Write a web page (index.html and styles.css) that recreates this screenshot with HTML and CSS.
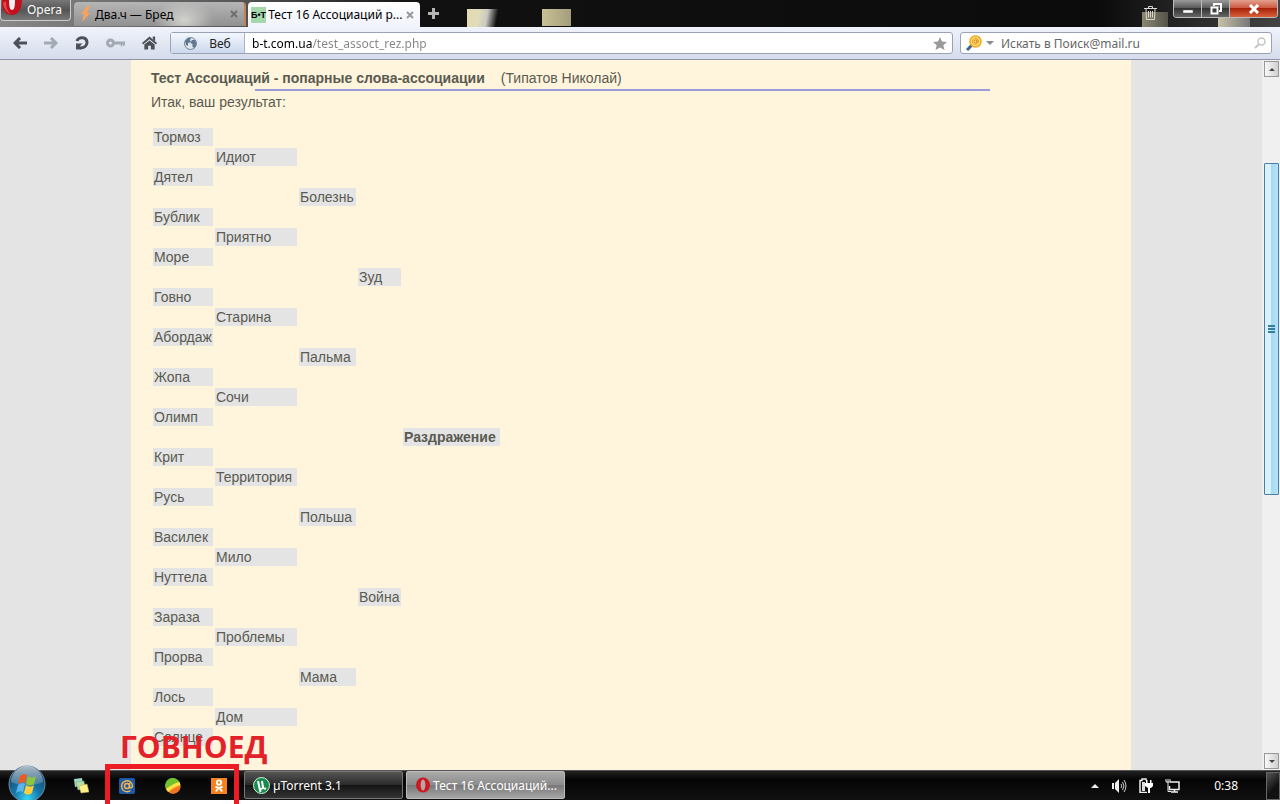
FILE: index.html
```html
<!DOCTYPE html>
<html lang="ru">

<head>
    <meta charset="UTF-8">
    <title>Тест 16 Ассоциаций</title>
    <link rel="stylesheet" href="styles.css">
</head>

<body>
    <header class="tabbar">
        <button class="opera-menu">
            <svg width="22" height="16" viewBox="0 0 22 16"><path d="M0 0h20c0 10-5 15-10 15C4 15 1 11 0 5z" fill="#c4101c"/><path d="M7 0h6c0 7-1 10-3 10S7 7 7 0z" fill="#eee"/><path d="M1 3c1 6 4 10 8 11-4-3-5-7-5-13" fill="#e8444a"/></svg>
            Opera
        </button>
        <nav class="tabs">
            <div class="tab">
                <svg width="12" height="18" viewBox="0 0 12 18"><path d="M7 1L1 9h3l-2 8 8-9H7l3-7z" fill="#f7a35c"/></svg>
                <a href="#">Два.ч — Бред</a>
                <button class="close" aria-label="Закрыть"><svg width="8" height="8" viewBox="0 0 8 8"><path d="M1 1l6 6M7 1L1 7" stroke="#6e6e6e" stroke-width="2"/></svg></button>
            </div>
            <div class="tab active">
                <span class="favicon">Б•Т</span>
                <a href="#">Тест 16 Ассоциаций р...</a>
                <button class="close" aria-label="Закрыть"><svg width="8" height="8" viewBox="0 0 8 8"><path d="M1 1l6 6M7 1L1 7" stroke="#999" stroke-width="2"/></svg></button>
            </div>
        </nav>
        <button class="new-tab" aria-label="Новая вкладка"><svg width="11" height="11" viewBox="0 0 11 11"><path d="M5.5 0v11M0 5.5h11" stroke="#b5b5b5" stroke-width="3"/></svg></button>
        <button class="trash" aria-label="Закрытые вкладки"><svg width="13" height="14" viewBox="0 0 13 14" fill="none" stroke="#d8d8d0"><path d="M0 2.5h13M4.5 2V.5h4V2M2 3l.5 10.5h8L11 3M4.5 5v6.5M6.5 5v6.5M8.5 5v6.5"/></svg></button>
        <div class="window-controls">
            <button aria-label="Свернуть"><svg width="12" height="12" viewBox="0 0 12 12"><path d="M1 7h10v3H1z" fill="#fff" stroke="#555" stroke-width=".5"/></svg></button>
            <button aria-label="Развернуть"><svg width="12" height="12" viewBox="0 0 12 12" fill="none" stroke="#fff" stroke-width="2"><path d="M4 3V1h7v7H9"/><path d="M1.5 4.5h6v6h-6z"/></svg></button>
            <button class="quit" aria-label="Выход"><svg width="12" height="10" viewBox="0 0 12 10"><path d="M2 1l8 8M10 1L2 9" stroke="#fff" stroke-width="3"/></svg></button>
        </div>
    </header>

    <div class="toolbar">
        <button aria-label="Назад"><svg width="14" height="12" viewBox="0 0 14 12" fill="none" stroke="#4c5158" stroke-width="3"><path d="M14 6H2M7 1L2 6l5 5"/></svg></button>
        <button aria-label="Вперёд"><svg width="14" height="12" viewBox="0 0 14 12" fill="none" stroke="#a3a9b3" stroke-width="3"><path d="M0 6h12M7 1l5 5-5 5"/></svg></button>
        <button aria-label="Обновить"><svg width="14" height="14" viewBox="0 0 14 14"><path d="M2 5C3 .5 12 .5 12 6.500C12 10 9 12 5 12" fill="none" stroke="#4c5158" stroke-width="3"/><path d="M1 7.500h6.500L5 10l1 3.500H1z" fill="#4c5158"/></svg></button>
        <button aria-label="Пароли"><svg width="19" height="10" viewBox="0 0 19 10" fill="none" stroke="#a3a9b3"><circle cx="4.500" cy="5" r="3" stroke-width="3"/><path d="M8 5h11" stroke-width="3"/><path d="M15.5 5v3.500M18 5v3" stroke-width="1.5"/></svg></button>
        <button aria-label="Домой"><svg width="15" height="14" viewBox="0 0 16 14" fill="#4c5158"><path d="M8 0l8 7-1 1.500L8 3 1 8.500 0 7z"/><path d="M11.5 0H14v5l-2.500-2z"/><path d="M2.500 8.500L8 4.200l5.500 4.300V14h-4v-4h-3v4h-4z"/></svg></button>
        <div class="address">
            <button class="site-info">
                <svg width="13" height="13" viewBox="0 0 13 13"><circle cx="6.500" cy="6.500" r="6" fill="#dde5ee" stroke="#718297"/><path d="M1 4l3-3 3 0-1 2 1 2-3 1 0 3-2-1zM8 3l3 0 1.500 4-2 4-2-1 0-3-2-1z" fill="#63778f"/></svg>
                Веб
            </button>
            <input class="url" type="text" aria-label="Адрес" value="b-t.com.ua/test_assoct_rez.php">
            <button aria-label="В закладки"><svg width="14" height="13" viewBox="0 0 14 13"><path d="M7 0l2 4.500 5 .5-3.700 3.300L11.500 13 7 10.500 2.500 13l1.200-4.700L0 5l5-.5z" fill="#999"/></svg></button>
        </div>
        <div class="search">
            <button aria-label="Выбор поиска">
                <svg width="28" height="16" viewBox="0 0 28 16"><path d="M1 15l5-5" stroke="#3d6692" stroke-width="3"/><circle cx="9.500" cy="6.500" r="5.500" fill="#ffe27a" stroke="#f5a51c" stroke-width="1.500"/><circle cx="9.500" cy="6.500" r="1.500" fill="none" stroke="#e0820f"/><path d="M11 4.500v3c.3 1 1.500.5 1.500-1a3 3 0 1 0-1.500 2.500" fill="none" stroke="#e0820f" stroke-width=".8"/><path d="M20 6h8l-4 4z" fill="#8a8a8a"/></svg>
            </button>
            <input type="text" aria-label="Поиск" placeholder="Искать в Поиск@mail.ru">
            <button aria-label="Найти"><svg width="12" height="12" viewBox="0 0 12 12" fill="none" stroke="#c5c5c5"><circle cx="7.500" cy="4.500" r="3.500" stroke-width="1.500"/><path d="M5 7l-4 4" stroke-width="2"/></svg></button>
        </div>
    </div>

    <div class="viewport">
        <main class="page">
            <div class="content">
                <p class="title"><b>Тест Ассоциаций - попарные слова-ассоциации</b> <span>(Типатов Николай)</span></p>
                <hr>
                <p>Итак, ваш результат:</p>
                <table class="words">
                    <colgroup><col class="c1"><col class="c2"><col class="c3"><col class="c4"><col class="c5"></colgroup>
                    <tbody></tbody>
                </table>
            </div>
        </main>
        <div class="scrollbar">
            <button aria-label="Вверх"><svg width="6" height="3" viewBox="0 0 8 4"><path d="M0 4l4-4 4 4z" fill="#444"/></svg></button>
            <div class="track">
                <div class="thumb"></div>
            </div>
            <button aria-label="Вниз"><svg width="6" height="3" viewBox="0 0 8 4"><path d="M0 0l4 4 4-4z" fill="#444"/></svg></button>
        </div>
    </div>

    <footer class="taskbar">
        <button class="start" aria-label="Пуск">
            <svg width="38" height="35" viewBox="0 0 38 35">
                <defs>
                    <radialGradient id="orb" cx=".5" cy=".9" r=".8"><stop offset="0" stop-color="#35d6f5"/><stop offset=".45" stop-color="#1878ac"/><stop offset="1" stop-color="#174568"/></radialGradient>
                    <linearGradient id="gloss" x2="0" y2="1"><stop offset="0" stop-color="#fff" stop-opacity=".65"/><stop offset="1" stop-color="#fff" stop-opacity=".15"/></linearGradient>
                </defs>
                <circle cx="19" cy="19" r="18" fill="url(#orb)" stroke="#6d8da2"/>
                <path d="M3 17a16 16 0 0 1 32 0c-9 4-22 5-32 0z" fill="url(#gloss)"/>
                <path d="M12 11c3-2 5-2 7-1l-2 8c-2-1-4-1-7 1z" fill="#ee5a23"/>
                <path d="M20 11c3 2 5 2 8 0l-2 8c-3 2-5 2-8 0z" fill="#8fc63d"/>
                <path d="M10 20c3-2 5-2 7-1l-2 8c-2-1-4-1-7 1z" fill="#5bb6ec"/>
                <path d="M18 20c3 2 5 2 8 0l-2 8c-3 2-5 2-8 0z" fill="#ffcf3a"/>
            </svg>
        </button>
        <div class="quick">
            <button aria-label="Записки"><svg width="16" height="16" viewBox="0 0 16 16"><path d="M1 1l8-1 1 7-8 2z" fill="#9fd9c8"/><path d="M3 4l8-1 1 7-7 2z" fill="#b6dfa0" stroke="#6ca08a" stroke-width=".5"/><path d="M6 8l8-2 2 8-8 1z" fill="#fff08a" stroke="#b9aa52" stroke-width=".5"/></svg></button>
            <div class="marked">
                <strong class="caption">ГОВНОЕД</strong>
                <button aria-label="Mail.ru"><svg width="16" height="16" viewBox="0 0 16 16"><rect width="16" height="16" rx="2" fill="#1b5ba5"/><g fill="none" stroke="#f4b34c" stroke-width="1.500"><circle cx="8" cy="8" r="2.500"/><path d="M10.500 5v4c.5 1.500 3 1 3-1A5.500 5.500 0 1 0 11.500 12.500"/></g></svg></button>
                <button aria-label="Браузер"><svg width="16" height="16" viewBox="0 0 16 16"><circle cx="8" cy="8" r="7.500" fill="#f8a01c"/><path d="M1 11A7.500 7.500 0 0 1 14.500 4C10 5 5 8 1 11z" fill="#6fc42e"/><path d="M1 11C5 8 10 5 14.500 4l1 3C10 8 6 11 3 14z" fill="#fbe34c"/><path d="M4 14.500C7 12 11 9 15.500 8A7.500 7.500 0 0 1 4 14.500z" fill="#ee7424"/></svg></button>
                <button aria-label="Одноклассники"><svg width="16" height="16" viewBox="0 0 16 16"><path fill="#f58220" d="M0 0h16v16H0z"/><g fill="none" stroke="#fff" stroke-width="1.800"><circle cx="8" cy="4.500" r="2.200"/><path d="M4.500 8.500c2 1.500 5 1.500 7 0M8 9.500L4.800 13.500M8 9.500l3.200 4"/></g></svg></button>
            </div>
        </div>
        <button class="task">
            <svg width="17" height="17" viewBox="0 0 17 17"><circle cx="8.500" cy="8.500" r="8" fill="#178a4c" stroke="#d8eee0"/><path d="M5 4l1.500 7c1 1.500 3 1 3.500-.5L9 4M10 10c.5 2 2 2 3 1M6.500 11l1 4" fill="none" stroke="#fff" stroke-width="2"/></svg>
            µTorrent 3.1
        </button>
        <button class="task current">
            <svg width="14" height="16" viewBox="0 0 14 16"><ellipse cx="7" cy="8" rx="7" ry="7.500" fill="#cc1820"/><ellipse cx="7" cy="8" rx="2.400" ry="5.500" fill="#b9a5a5"/></svg>
            Тест 16 Ассоциаций...
        </button>
        <div class="tray">
            <button aria-label="Скрытые значки"><svg width="8" height="4" viewBox="0 0 8 4"><path d="M0 4l4-4 4 4z" fill="#eee"/></svg></button>
            <button aria-label="Громкость"><svg width="16" height="14" viewBox="0 0 16 14"><path d="M1 4h2v6H1zM4 4l4-4v14l-4-4z" fill="#eee"/><path d="M10 5q1.500 2 0 4M11.500 3q3 4 0 8M13 1q4 6 0 12" fill="none" stroke="#ccc"/></svg></button>
            <button aria-label="Питание"><svg width="14" height="15" viewBox="0 0 14 15"><path d="M7 2.500V1H3v1.500H1v12h7" fill="none" stroke="#eee" stroke-width="1.500"/><path d="M3 4h3v9H3z" fill="#ddd"/><path d="M7 2h1.500v3H11V2h1.500v3H14v3l-2 2h-1v5H9v-5L6 8V5h1z" fill="#fff"/></svg></button>
            <button aria-label="Сеть"><svg width="15" height="14" viewBox="0 0 15 14" fill="none" stroke="#eee"><path d="M5 3h9v7.500H4.500V7M9.500 10.500v3M6 13h7" stroke-width="1.500"/><path d="M1 0v3h4V0M3 0v12.500h3"/></svg></button>
            <time>0:38</time>
            <button class="show-desktop" aria-label="Показать рабочий стол"></button>
        </div>
    </footer>

    <script>
        // слово и номер его столбца
        let words = [
            ["Тормоз", 0], ["Идиот", 1], ["Дятел", 0], ["Болезнь", 2],
            ["Бублик", 0], ["Приятно", 1], ["Море", 0], ["Зуд", 3],
            ["Говно", 0], ["Старина", 1], ["Абордаж", 0], ["Пальма", 2],
            ["Жопа", 0], ["Сочи", 1], ["Олимп", 0], ["Раздражение", 4],
            ["Крит", 0], ["Территория", 1], ["Русь", 0], ["Польша", 2],
            ["Василек", 0], ["Мило", 1], ["Нуттела", 0], ["Война", 3],
            ["Зараза", 0], ["Проблемы", 1], ["Прорва", 0], ["Мама", 2],
            ["Лось", 0], ["Дом", 1], ["Солнце", 0]
        ];
        let dest = document.querySelector(".words tbody");

        words.forEach(([word, column]) => {
            let row = dest.insertRow();
            for (let i = 0; i < 5; i++) {
                let cell = row.insertCell();
                if (i == column) {
                    cell.textContent = word;
                    cell.className = "word";
                }
            }
        });
    </script>
</body>

</html>
```
FILE: styles.css
```css
* {
    box-sizing: border-box;
}

body {
    margin: 0;
    padding-bottom: 4px;
    height: 100vh;
    display: flex;
    flex-direction: column;
    overflow: hidden;
    background-color: #fff;
    font-family: "Noto Sans", "Open Sans", sans-serif;
    font-size: 12px;
}

button {
    display: flex;
    align-items: center;
    justify-content: center;
    margin: 0;
    padding: 0;
    border: 0;
    background: none;
    font: inherit;
    color: inherit;
}

svg {
    display: block;
    flex: none;
}

input {
    flex: 1;
    min-width: 0;
    padding: 0;
    border: 0;
    outline: 0;
    background: none;
    font: inherit;
}

/* вкладки */
.tabbar {
    flex: none;
    display: flex;
    align-items: flex-start;
    height: 27px;
    background:
        radial-gradient(ellipse 22px 20px at 480px 22px, #d8d3b4 40%, transparent) 466px 8px / 36px 19px no-repeat,
        linear-gradient(100deg, #e2dcb6 35%, #c9c9c4 60%, transparent 90%) 467px 9px / 32px 18px no-repeat,
        linear-gradient(90deg, #c9c193, #a39d7c) 542px 9px / 29px 17px no-repeat,
        linear-gradient(90deg, #8b8870, #55534a) 1142px 12px / 26px 15px no-repeat,
        linear-gradient(90deg, #c7c2a6, #777) 1218px 18px / 32px 9px no-repeat,
        linear-gradient(90deg, #888 0, #555 240px, #111 420px, #0b0b0b 1100px, #444 1280px);
}

.opera-menu {
    width: 71px;
    height: 21px;
    justify-content: flex-start;
    align-items: flex-start;
    gap: 3px;
    padding-left: 1px;
    border: 1px solid #ccc;
    border-top: 0;
    border-radius: 0 0 4px 4px;
    background: linear-gradient(#777, #555 50%, #777);
    color: #fff;
    line-height: 20px;
}

.tabs {
    display: flex;
    gap: 2px;
    padding: 2px 0 0 3px;
}

.tab {
    display: flex;
    align-items: center;
    gap: 3px;
    width: 172px;
    height: 24px;
    padding: 0 6px;
    border-radius: 4px 4px 0 0;
    background: radial-gradient(ellipse 30px 20px at 110px 18px, #d2d2ce, transparent), linear-gradient(#b5b5b5, #919191);
    border-right: 2px solid #c28252;
}

.tab.active {
    height: 25px;
    padding: 0 6px 0 3px;
    gap: 2px;
    border: 0;
    background: linear-gradient(#fff, #f0f3fb);
}

.tab a {
    flex: 1;
    color: #000;
    text-decoration: none;
    white-space: nowrap;
}

.favicon {
    background-color: #a4d7aa;
    font-family: "Liberation Sans", sans-serif;
    font-size: 9px;
    font-weight: bold;
    line-height: 16px;
}

.new-tab {
    height: 27px;
    padding-left: 8px;
}

.trash {
    height: 26px;
    margin-left: auto;
}

.window-controls {
    display: flex;
    height: 18px;
    margin: 0 2px 0 16px;
    border: 1px solid #bbb;
    border-top: 0;
    border-radius: 0 0 4px 4px;
    overflow: hidden;
}

.window-controls button {
    width: 28px;
    background: linear-gradient(#9a9a9a, #555 50%, #333 50%, #666);
    border-right: 1px solid #bbb;
}

.window-controls .quit {
    width: 47px;
    border: 0;
    background: linear-gradient(#e3a08e, #c9543a 50%, #a92208 50%, #d9603a);
}

/* панель адреса */
.toolbar {
    flex: none;
    display: flex;
    align-items: center;
    gap: 17px;
    height: 33px;
    padding: 0 8px 0 13px;
    border-bottom: 1px solid #8f93a8;
    background: linear-gradient(#f0f3fb, #d5dceb);
}

.address,
.search {
    display: flex;
    align-items: center;
    height: 22px;
    border: 1px solid #9aa3b5;
    border-radius: 3px;
    background-color: #fff;
}

.address {
    flex: 1;
    padding-right: 5px;
    margin: 0 -10px 0 -4px;
}

.site-info {
    width: 74px;
    height: 20px;
    gap: 12px;
    border-right: 1px solid #a9b4c8;
    background: linear-gradient(#f3f7fd, #ccd9ec);
    color: #222;
}

.url {
    margin-left: 7px;
    background: linear-gradient(90deg, #000 60px, #858585 60px);
    -webkit-background-clip: text;
    background-clip: text;
    color: transparent;
}

.search {
    width: 312px;
    gap: 7px;
    padding: 0 5px;
}

.search input::placeholder {
    color: #666;
    opacity: 1;
}

/* страница */
.viewport {
    flex: 1;
    min-height: 0;
    display: flex;
    background-color: #e4e4e4;
}

.page {
    flex: 1;
    overflow: hidden;
}

.content {
    max-width: 1000px;
    min-height: 100%;
    margin: 0 auto;
    padding: 8px 37px 0 20px;
    background-color: #fff5dd;
    color: #5a5a50;
    font-family: "Liberation Sans", Arial, sans-serif;
    font-size: 14px;
    line-height: 20px;
}

.content p {
    margin: 0;
}

.title span {
    margin-left: 12px;
}

.content hr {
    width: 78%;
    height: 2px;
    margin: 1px auto;
    border: 0;
    background-color: #9c9cdd;
}

.words {
    width: 351px;
    margin-top: 14px;
    table-layout: fixed;
    border-spacing: 2px;
    line-height: 16px;
}

.words td {
    height: 18px;
    padding: 1px;
    white-space: nowrap;
}

.words .word {
    background-color: #e4e4e4;
}

.words .word:last-child {
    font-weight: bold;
}

.c1 {
    width: 60px;
}

.c2 {
    width: 82px;
}

.c3 {
    width: 57px;
}

.c4 {
    width: 43px;
}

.c5 {
    width: 97px;
}

.scrollbar {
    flex: none;
    display: flex;
    flex-direction: column;
    width: 18px;
    padding: 1px 1px 1px 2px;
    background-color: #f0f0f0;
}

.scrollbar button {
    height: 16px;
    border: 1px solid #999;
    background: linear-gradient(90deg, #f8f8f8, #d0d0d0);
}

.track {
    flex: 1;
    display: grid;
    grid-template-rows: 86fr 332fr 258fr;
}

.thumb {
    grid-row: 2;
    border: 1px solid #4a7fa8;
    border-radius: 1px;
    background:
        repeating-linear-gradient(#347f9e 0 2px, transparent 2px 3px) center / 7px 8px no-repeat,
        linear-gradient(90deg, #d9f1fd 45%, #a5daf5 50%, #b5e2f8);
}

/* панель задач */
.taskbar {
    flex: none;
    display: flex;
    height: 30px;
    border-top: 1px solid #555;
    background: linear-gradient(#222, #050505 30%, #111);
    color: #fff;
}

.start {
    align-self: flex-end;
    margin-left: 8px;
}

.quick {
    display: flex;
    align-items: center;
    margin-left: 27px;
}

.marked {
    position: relative;
    display: flex;
    gap: 30px;
    padding: 0 17px 0 30px;
}

.marked::before {
    content: "";
    position: absolute;
    left: 16px;
    right: 5px;
    top: -14px;
    height: 40px;
    border: 5px solid #ed1c24;
}

.caption {
    position: absolute;
    left: 31px;
    bottom: 31px;
    color: #e32128;
    font-family: "Open Sans", "Noto Sans", sans-serif;
    font-size: 30px;
    line-height: 32px;
}

.task {
    width: 159px;
    height: 28px;
    justify-content: flex-start;
    gap: 3px;
    margin-right: 3px;
    padding-left: 8px;
    border: 1px solid #777;
    border-radius: 2px;
    background: linear-gradient(#555, #2a2a2a 50%, #141414 50%, #333);
    white-space: nowrap;
}

.task.current {
    padding-left: 9px;
    border-color: #bbb;
    background: linear-gradient(#aaa, #8c8c8c 50%, #777 50%, #a5a5a5);
}

.tray {
    display: flex;
    align-items: center;
    gap: 12px;
    margin-left: auto;
}

.tray time {
    margin: 0 16px 0 22px;
}

.show-desktop {
    width: 14px;
    height: 28px;
    border: 1px solid #666;
    background: linear-gradient(135deg, #555, #111 60%);
}
```
